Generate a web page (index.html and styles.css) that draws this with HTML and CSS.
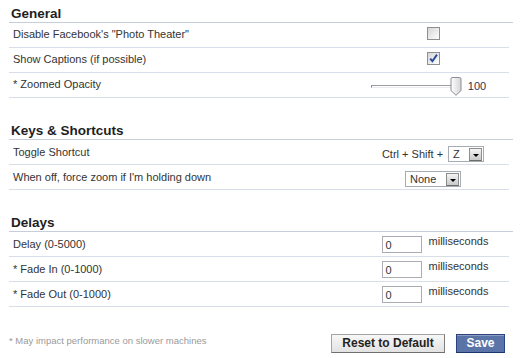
FILE: index.html
```html
<!DOCTYPE html>
<html>
<head>
<meta charset="utf-8">
<link rel="stylesheet" href="styles.css">
</head>
<body>
<div class="panel">
  <section class="group group-general">
    <h2 class="group-title">General</h2>
    <div class="row">
      <span class="label">Disable Facebook's "Photo Theater"</span>
      <span class="ctl"><span class="checkbox"></span></span>
    </div>
    <div class="row">
      <span class="label">Show Captions (if possible)</span>
      <span class="ctl"><span class="checkbox checked"><svg width="11" height="11" viewBox="0 0 11 11"><path d="M2.2 5.6 L4.4 8.2 L9 1.6" fill="none" stroke="#2a4c9c" stroke-width="2"/></svg></span></span>
    </div>
    <div class="row">
      <span class="label">* Zoomed Opacity</span>
      <span class="ctl">
        <span class="slider">
          <span class="track"></span>
          <svg class="thumb" width="12" height="19" viewBox="0 0 12 19"><defs><linearGradient id="tg" x1="0" y1="0" x2="1" y2="0"><stop offset="0" stop-color="#ffffff"/><stop offset="1" stop-color="#d4d4d8"/></linearGradient></defs><path d="M2 .5 H9.5 A1.5 1.5 0 0 1 11 2 V13.5 L6 18.3 L1 13.5 V2 A1.5 1.5 0 0 1 2 .5Z" fill="url(#tg)" stroke="#8c8c94"/></svg>
          <span class="value">100</span>
        </span>
      </span>
    </div>
  </section>

  <section class="group group-keys">
    <h2 class="group-title">Keys &amp; Shortcuts</h2>
    <div class="row">
      <span class="label">Toggle Shortcut</span>
      <span class="ctl ctl-low">
        <span class="combo-text">Ctrl + Shift +</span>
        <span class="select select-z"><span class="select-value">Z</span><span class="select-btn"><span class="arrow"></span></span></span>
      </span>
    </div>
    <div class="row">
      <span class="label">When off, force zoom if I'm holding down</span>
      <span class="ctl ctl-low">
        <span class="select select-none"><span class="select-value">None</span><span class="select-btn"><span class="arrow"></span></span></span>
      </span>
    </div>
  </section>

  <section class="group group-delays">
    <h2 class="group-title">Delays</h2>
    <div class="row">
      <span class="label">Delay (0-5000)</span>
      <span class="ctl ctl-field"><span class="field">0</span><span class="unit">milliseconds</span></span>
    </div>
    <div class="row">
      <span class="label">* Fade In (0-1000)</span>
      <span class="ctl ctl-field"><span class="field">0</span><span class="unit">milliseconds</span></span>
    </div>
    <div class="row">
      <span class="label">* Fade Out (0-1000)</span>
      <span class="ctl ctl-field"><span class="field">0</span><span class="unit">milliseconds</span></span>
    </div>
  </section>

  <div class="footer">
    <span class="note">* May impact performance on slower machines</span>
    <div class="actions">
      <button class="btn">Reset to Default</button>
      <button class="btn btn-primary">Save</button>
    </div>
  </div>
</div>
</body>
</html>
```

FILE: styles.css
```css
body {
  margin: 0;
  background: #ffffff;
  font-family: "Liberation Sans", Arial, sans-serif;
  font-size: 11px;
  color: #333333;
}

.panel {
  padding-left: 9px;
  width: 504px;
}

.group + .group {
  margin-top: 19px;
}

.group-title {
  margin: 0;
  padding: 6px 0 0 2px;
  height: 16px;
  line-height: 16px;
  font-size: 13.5px;
  font-weight: bold;
  color: #1e1e1e;
  border-bottom: 1px solid #c6cedc;
}

.row {
  display: flex;
  align-items: center;
  width: 500px;
  height: 24px;
  border-bottom: 1px solid #d8dfea;
  box-sizing: content-box;
}

.group-general .row {
  height: 21px;
  padding-bottom: 3px;
}

.label {
  flex: 1;
  padding-left: 4px;
}

.ctl {
  width: 152px;
  display: flex;
  justify-content: center;
  align-items: center;
}

.ctl-low {
  padding-top: 4px;
}

.ctl-field {
  padding-left: 4px;
  box-sizing: border-box;
}

.checkbox {
  width: 11px;
  height: 11px;
  border: 1px solid #8e8f8f;
  background: linear-gradient(135deg, #d6d6d6 0%, #f2f2f2 70%, #ffffff 100%);
  display: flex;
  align-items: center;
  justify-content: center;
}

.slider {
  display: flex;
  align-items: center;
  margin-right: 9px;
  margin-top: 5px;
}

.track {
  width: 84px;
  height: 1px;
  border-top: 1px solid #9d9da6;
  border-bottom: 1px solid #ececf0;
  border-left: 1px solid #808088;
}

.thumb {
  margin-left: -6px;
  display: block;
}

.value {
  margin-left: 6px;
  color: #2b3550;
}

.combo-text {
  margin-right: 5px;
}

.select {
  display: flex;
  height: 14px;
  border: 1px solid #a5acb2;
  background: #ffffff;
  align-items: stretch;
}

.select-z { width: 34px; }
.select-none { width: 54px; }

.select-value {
  flex: 1;
  padding-left: 4px;
  line-height: 14px;
  color: #333;
}

.select-btn {
  width: 13px;
  margin: 1px 1px 0 0;
  border: 1px solid #8d8d8d;
  border-bottom-color: #6d6d6d;
  background: linear-gradient(#f4f4f4, #c9c9c9);
  display: flex;
  justify-content: center;
  align-items: flex-end;
  padding-bottom: 3px;
  box-sizing: border-box;
  height: 13px;
}

.arrow {
  width: 0;
  height: 0;
  border-left: 3px solid transparent;
  border-right: 3px solid transparent;
  border-top: 3px solid #000000;
}

.field {
  width: 35px;
  height: 15px;
  border: 1px solid #a9adb3;
  padding-left: 3px;
  line-height: 16px;
  color: #333;
  background: #fff;
}

.unit {
  margin-left: 7px;
  padding-bottom: 6px;
}

.footer {
  display: flex;
  justify-content: space-between;
  align-items: flex-start;
  width: 496px;
  padding-right: 4px;
  margin-top: 27px;
}

.note {
  font-size: 9.5px;
  line-height: 12px;
  color: #9a9a9a;
  padding-top: 1px;
}

.actions {
  display: flex;
  gap: 11px;
}

.btn {
  font-family: "Liberation Sans", Arial, sans-serif;
  font-size: 12px;
  font-weight: bold;
  height: 19px;
  line-height: 17px;
  padding: 0;
  width: 114px;
  border: 1px solid #a3a3a3;
  border-right-color: #7d7d7d;
  border-bottom-color: #6f6f6f;
  background: linear-gradient(#f7f7f7, #e2e2e2);
  color: #222222;
  text-align: center;
}

.btn-primary {
  width: 49px;
  background: #5b74a8;
  border: 1px solid #29447e;
  border-bottom-color: #1a356e;
  box-shadow: inset 0 1px 0 #8a9cc2;
  color: #ffffff;
}
```
